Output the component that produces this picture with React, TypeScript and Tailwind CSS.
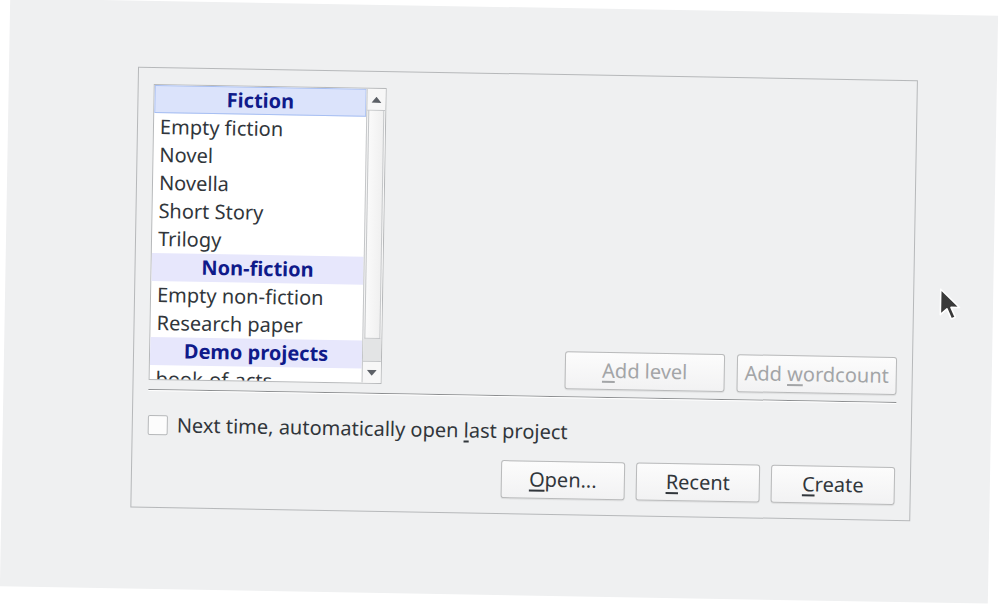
import React from "react";

const font = { fontFamily: '"Noto Sans", "DejaVu Sans", sans-serif' };

function Header({ label, current }: { label: string; current?: boolean }) {
  return (
    <div
      className={
        "h-[28px] flex items-center justify-center font-bold text-[#0f1a8a] " +
        (current ? "bg-[#dbe3fb] border border-[#a7bff2]" : "bg-[#e7e7fc]")
      }
    >
      {label}
    </div>
  );
}

function Item({ label }: { label: string }) {
  return <div className="h-[28px] flex items-center pl-[6px] text-[#31363b] whitespace-nowrap">{label}</div>;
}

function Btn({ children, disabled, w }: { children: React.ReactNode; disabled?: boolean; w: string }) {
  return (
    <div
      className={
        w +
        " h-[38px] flex items-center justify-center whitespace-nowrap rounded-[3px] border border-[#b9babb] bg-gradient-to-b from-[#fcfcfc] to-[#f2f2f3] shadow-[0_1px_1px_rgba(0,0,0,0.08)] " +
        (disabled ? "text-[#a3a5a7]" : "text-[#31363b]")
      }
    >
      <span className="whitespace-pre">{children}</span>
    </div>
  );
}

export default function App() {
  return (
    <div className="w-[1000px] h-[607px] bg-white overflow-hidden text-[20px] leading-[28px]" style={font}>
      <div className="relative ml-[5px] mt-[7px] w-[988px] h-[588px] bg-[#eff0f1] rotate-[1deg] pl-[129px] pt-[66px]">
        <div className="w-[780px] h-[441px] border border-[#b6b8ba] px-[15px] pt-[16px] pb-[13px] flex flex-col">
          <div className="flex items-end">
            <div className="w-[233px] h-[296px] border border-[#b6b8ba] bg-white flex overflow-hidden">
              <div className="flex-1 overflow-hidden">
                <Header label="Fiction" current />
                <Item label="Empty fiction" />
                <Item label="Novel" />
                <Item label="Novella" />
                <Item label="Short Story" />
                <Item label="Trilogy" />
                <Header label="Non-fiction" />
                <Item label="Empty non-fiction" />
                <Item label="Research paper" />
                <Header label="Demo projects" />
                <Item label="book-of-acts" />
              </div>
              <div className="w-[19px] border-l border-[#c4c6c8] bg-[#f7f7f7] flex flex-col">
                <div className="h-[22px] border-b border-[#c4c6c8] flex items-center justify-center">
                  <svg width="10" height="6" viewBox="0 0 10 6">
                    <path d="M0 6 L5 0 L10 6 Z" fill="#5c6066" />
                  </svg>
                </div>
                <div className="flex-1 flex flex-col">
                  <div className="h-[228px] mx-[1px] border-x border-b border-[#c4c6c8] bg-gradient-to-r from-[#fafafa] to-[#f0f0f0]" />
                  <div className="flex-1 bg-[#e3e4e5]" />
                </div>
                <div className="h-[22px] border-t border-[#c4c6c8] flex items-center justify-center">
                  <svg width="10" height="6" viewBox="0 0 10 6">
                    <path d="M0 0 L5 6 L10 0 Z" fill="#5c6066" />
                  </svg>
                </div>
              </div>
            </div>
            <div className="flex-1" />
            <div className="flex gap-[12px] mb-[-2px]">
              <Btn disabled w="w-[160px]">
                <span className="underline underline-offset-[3px]">A</span>
                {"dd level"}
              </Btn>
              <Btn disabled w="w-[160px]">
                {"Add "}
                <span className="underline underline-offset-[3px]">w</span>
                {"ordcount"}
              </Btn>
            </div>
          </div>
          <div className="mt-[9px] h-[2px] border-t border-[#8c8e90] border-b border-b-white" />
          <div className="mt-[20px] flex items-center gap-[9px] text-[#31363b]">
            <div className="w-[20px] h-[20px] border border-[#b6b8ba] bg-[#fcfcfc] rounded-[2px]" />
            <span className="whitespace-nowrap">
              {"Next time, automatically open "}
              <span className="underline underline-offset-[3px]">l</span>
              {"ast project"}
            </span>
          </div>
          <div className="mt-[15px] flex justify-end gap-[11px]">
            <Btn w="w-[124px]">
              <span className="underline underline-offset-[3px]">O</span>
              {"pen..."}
            </Btn>
            <Btn w="w-[124px]">
              <span className="underline underline-offset-[3px]">R</span>
              {"ecent"}
            </Btn>
            <Btn w="w-[124px]">
              <span className="underline underline-offset-[3px]">C</span>
              {"reate"}
            </Btn>
          </div>
        </div>
        <svg className="absolute left-[934px] top-[273px]" width="24" height="34" viewBox="0 0 24 34">
          <path d="M1.5 1.5 L1.5 27 L8 21 L12.5 31 L16.5 29.2 L12 19.5 L20.5 19.5 Z" fill="#3a3a3a" stroke="white" strokeWidth="1.6" strokeLinejoin="round" />
        </svg>
      </div>
    </div>
  );
}
